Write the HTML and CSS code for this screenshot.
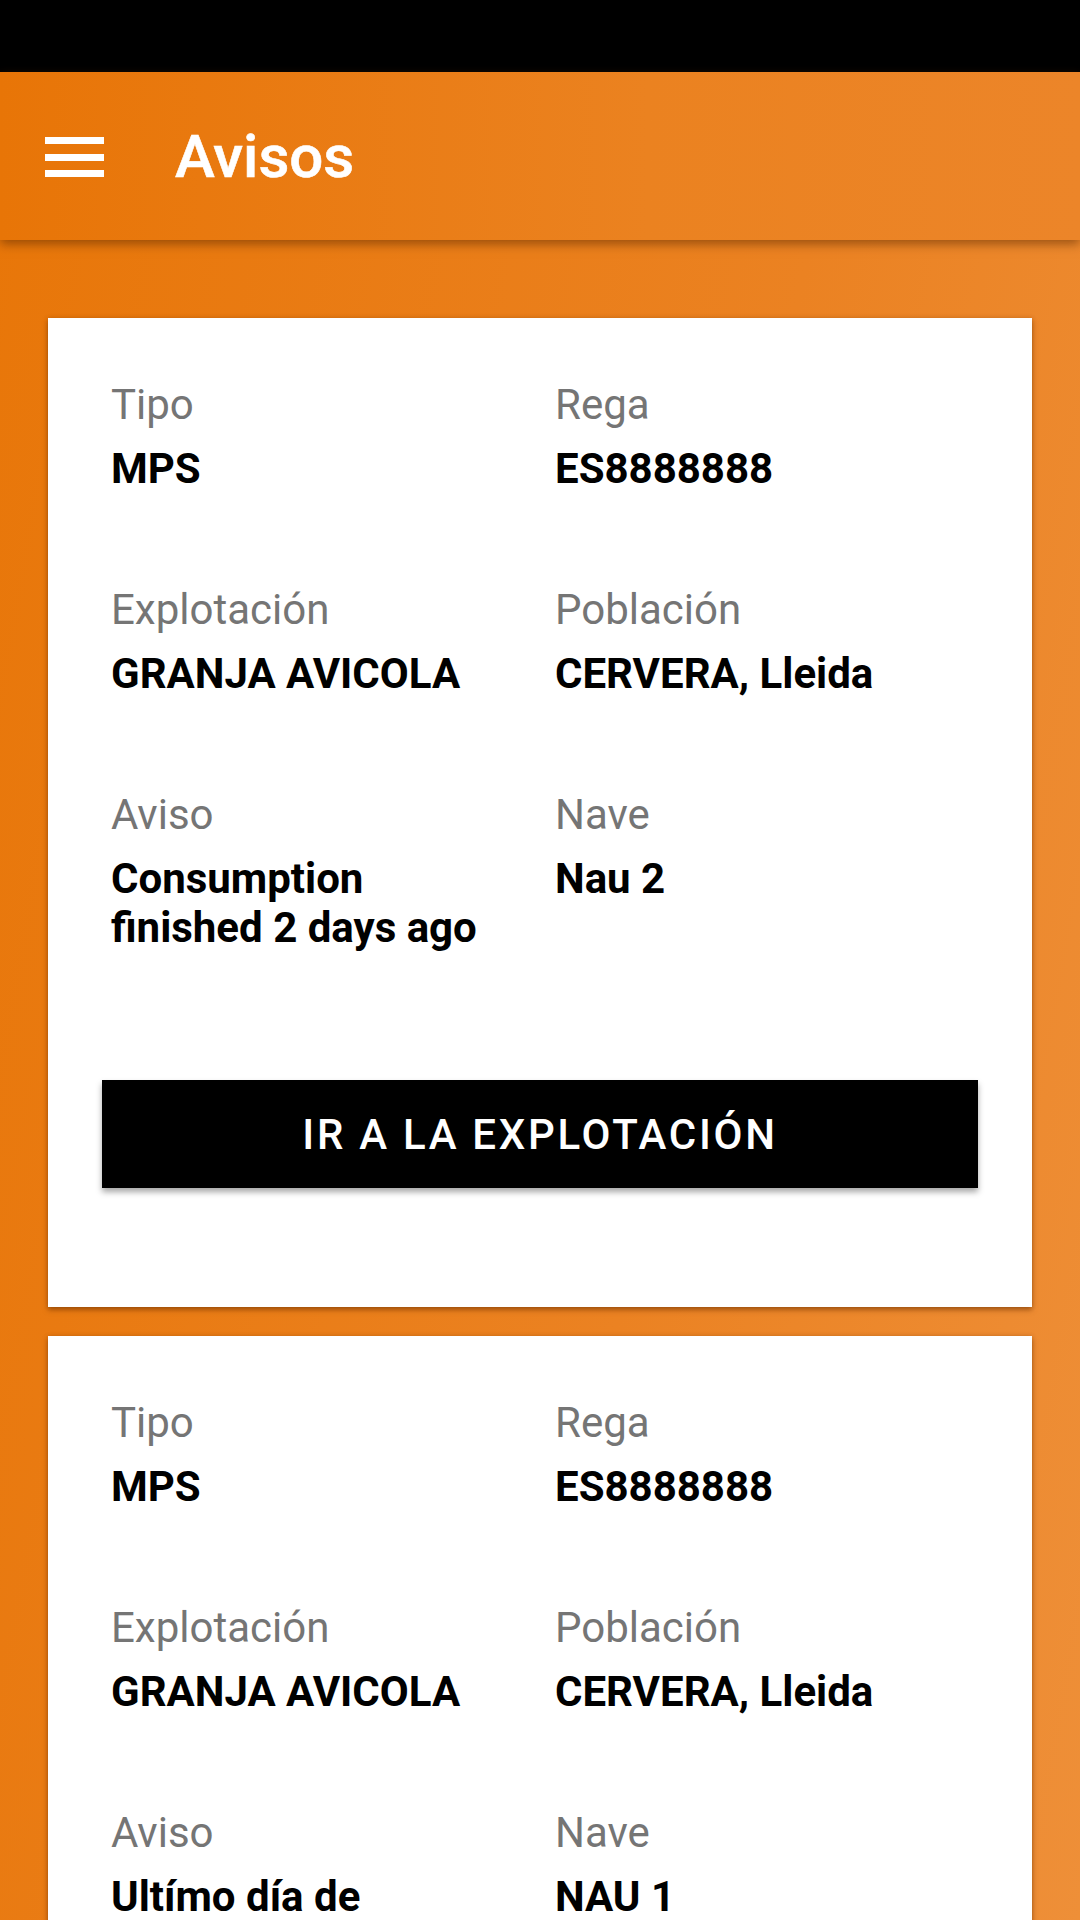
FILE: index.html
```html
<!DOCTYPE html>
<html lang="es">

<head>
    <meta charset="UTF-8">
    <meta name="viewport" content="width=device-width, initial-scale=1.0">
    <title>Avisos</title>
    <link rel="stylesheet" href="styles.css">
</head>

<body>
    <div id="status"></div>

    <header id="appbar">
        <svg class="menu" width="59" height="41" viewBox="0 0 59 41">
            <rect x="0" y="0" width="59" height="7" fill="#fff" />
            <rect x="0" y="17" width="59" height="7" fill="#fff" />
            <rect x="0" y="33" width="59" height="7" fill="#fff" />
        </svg>
        <h1>Avisos</h1>
    </header>

    <main id="list">
        <!-- aviso 1 -->
        <section class="card">
            <div class="fields">
                <div class="field">
                    <p class="label">Tipo</p>
                    <p class="value">MPS</p>
                </div>
                <div class="field">
                    <p class="label">Rega</p>
                    <p class="value">ES8888888</p>
                </div>
                <div class="field">
                    <p class="label">Explotación</p>
                    <p class="value">GRANJA AVICOLA</p>
                </div>
                <div class="field">
                    <p class="label">Población</p>
                    <p class="value">CERVERA, Lleida</p>
                </div>
                <div class="field">
                    <p class="label">Aviso</p>
                    <p class="value">Consumption finished 2 days ago</p>
                </div>
                <div class="field">
                    <p class="label">Nave</p>
                    <p class="value">Nau 2</p>
                </div>
            </div>
            <button class="go">IR A LA EXPLOTACIÓN</button>
        </section>

        <!-- aviso 2 -->
        <section class="card">
            <div class="fields">
                <div class="field">
                    <p class="label">Tipo</p>
                    <p class="value">MPS</p>
                </div>
                <div class="field">
                    <p class="label">Rega</p>
                    <p class="value">ES8888888</p>
                </div>
                <div class="field">
                    <p class="label">Explotación</p>
                    <p class="value">GRANJA AVICOLA</p>
                </div>
                <div class="field">
                    <p class="label">Población</p>
                    <p class="value">CERVERA, Lleida</p>
                </div>
                <div class="field">
                    <p class="label">Aviso</p>
                    <p class="value">Ultímo día de consumo</p>
                </div>
                <div class="field">
                    <p class="label">Nave</p>
                    <p class="value">NAU 1</p>
                </div>
            </div>
            <button class="go">IR A LA EXPLOTACIÓN</button>
        </section>
    </main>
</body>

</html>
```

FILE: styles.css
```css
* {
    margin: 0;
    padding: 0;
    box-sizing: border-box;
}

html,
body {
    height: 100%;
}

body {
    overflow: hidden;
    font-family: Roboto, "Noto Sans", sans-serif;
    background: linear-gradient(100deg, #e87608 0%, #eb8222 60%, #ee8f38 100%);
}

/* status bar */
#status {
    height: 72px;
    background: #000;
}

/* app bar */
#appbar {
    position: relative;
    z-index: 1;
    display: flex;
    align-items: center;
    height: 168px;
    padding-left: 45px;
    background: linear-gradient(to right, #e87507 0%, #eb8220 60%, #ec8529 100%);
    box-shadow: 0 4px 10px rgba(90, 40, 0, 0.55);
}

.menu {
    display: block;
    margin-top: 2px;
}

h1 {
    margin-left: 71px;
    color: #fff;
    font-size: 60px;
    font-weight: 500;
    -webkit-text-stroke: 0.6px #fff;
}

/* cards */
#list {
    display: flex;
    flex-direction: column;
    gap: 29px;
    padding: 78px 48px 0;
}

.card {
    background: #fff;
    padding: 62px 63px 119px;
    box-shadow: 0 3px 5px rgba(110, 50, 0, 0.55), 0 0 4px rgba(120, 60, 0, 0.25);
}

.fields {
    display: grid;
    grid-template-columns: 413px 413px;
    column-gap: 31px;
    row-gap: 92px;
}

.field {
    padding-right: 30px;
}

.label {
    font-size: 42px;
    line-height: 49px;
    color: #757575;
}

.value {
    margin-top: 15px;
    font-size: 42px;
    line-height: 49px;
    font-weight: 700;
    color: #000;
}

.go {
    display: block;
    width: 876px;
    height: 108px;
    margin: 128px 0 0 -9px;
    border: none;
    background: #000;
    color: #fff;
    font-family: Roboto, sans-serif;
    font-size: 42px;
    font-weight: 500;
    letter-spacing: 2.7px;
    box-shadow: 0 4px 6px rgba(0, 0, 0, 0.35);
}
```
